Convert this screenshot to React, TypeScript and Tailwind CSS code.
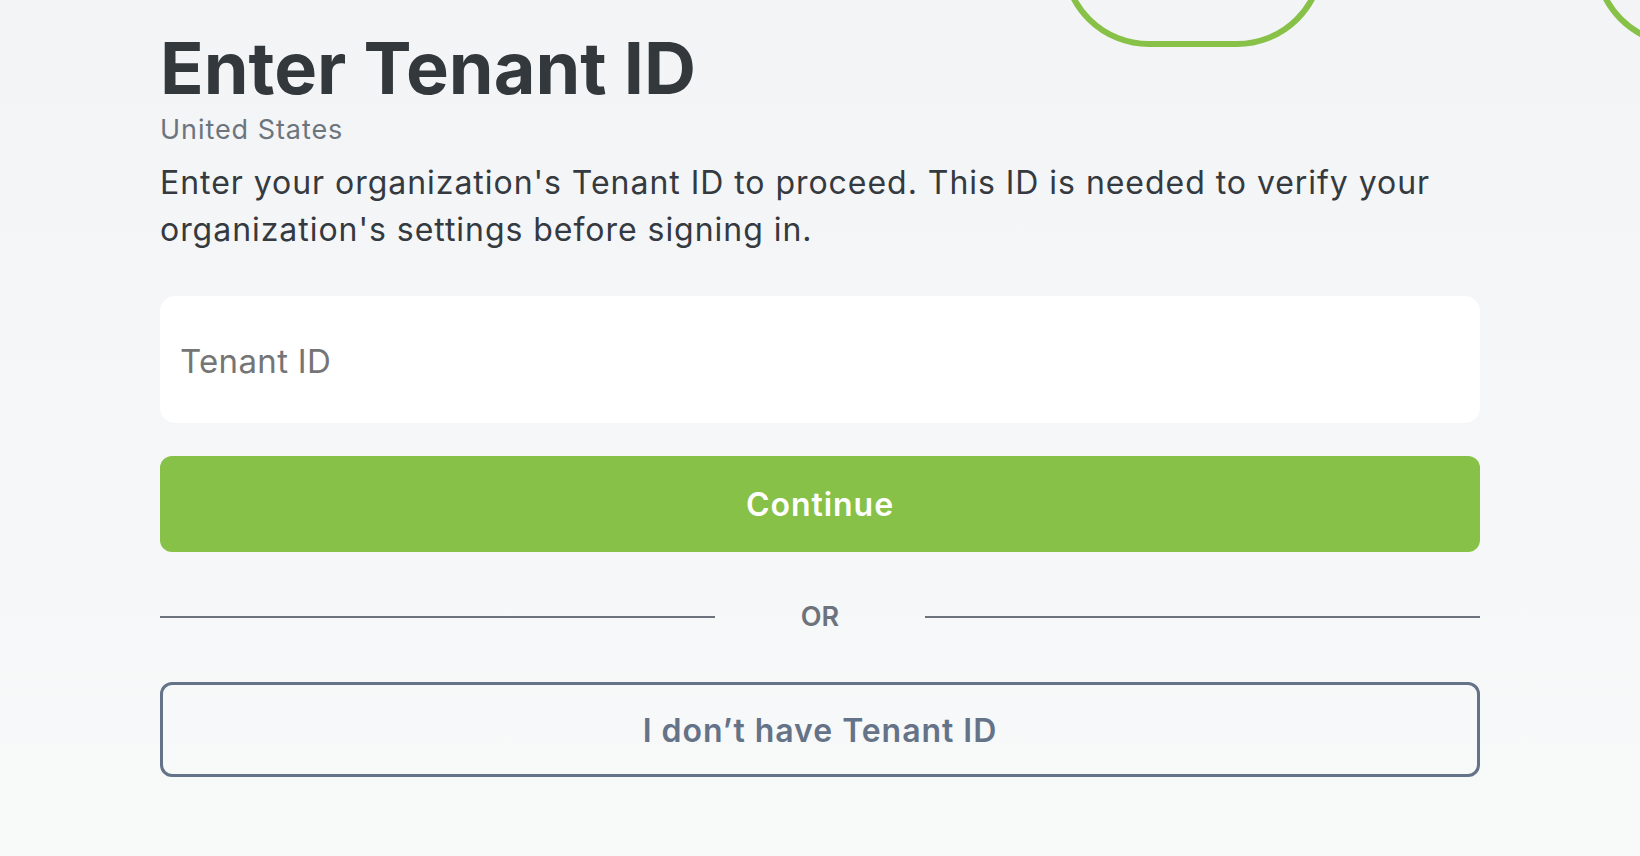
import { useState } from 'react';

export default function App() {
    const [tenantId, setTenantId] = useState('');

    return (
        <div className="relative min-h-[856px] w-full overflow-hidden bg-gradient-to-b from-[#f3f4f6] to-[#f8f9f9] font-['Inter',sans-serif]">
            {/* decorative outlines, top right */}
            <div className="absolute left-[1061px] top-[-217px] h-[264px] w-[264px] rounded-[88px] border-[6px] border-[#87c147]" />
            <div className="absolute left-[1593px] top-[-217px] h-[264px] w-[264px] rounded-[88px] border-[6px] border-[#87c147]" />

            <div className="relative mx-auto w-[1320px] pt-[32px]">
                <h1 className="text-[72px] font-bold leading-[72px] text-[#33383d]">Enter Tenant ID</h1>
                <p className="mt-[10px] text-[27px] leading-[32px] tracking-[0.035em] text-[#6c757d]">United States</p>
                <p className="mt-[13px] text-[32px] leading-[47px] tracking-[0.03em] text-[#343a40]">
                    Enter your organization's Tenant ID to proceed. This ID is needed to verify your organization's settings before signing in.
                </p>

                <input
                    value={tenantId}
                    onChange={(e) => setTenantId(e.target.value)}
                    placeholder="Tenant ID"
                    className="mt-[43px] block h-[127px] w-full rounded-[15px] bg-white px-[20px] pt-[2px] text-[33px] tracking-[0.01em] text-[#343a40] outline-none placeholder:text-[#757575]"
                />

                <button className="mt-[33px] flex h-[96px] w-full items-center justify-center rounded-[12px] bg-[#87c147] pt-[2px] text-[32px] font-semibold tracking-[0.03em] text-white">
                    Continue
                </button>

                {/* divider */}
                <div className="mt-[45px] flex h-[40px] items-center">
                    <div className="h-[2px] flex-1 bg-[#6c737d]" />
                    <span className="w-[210px] text-center text-[27px] font-semibold text-[#6c737d]">OR</span>
                    <div className="h-[2px] flex-1 bg-[#6c737d]" />
                </div>

                <button className="mt-[45px] flex h-[95px] w-full items-center justify-center rounded-[12px] border-[3px] border-[#657388] pt-[2px] text-[32px] font-semibold tracking-[0.03em] text-[#657388]">
                    I don’t have Tenant ID
                </button>
            </div>
        </div>
    );
}
